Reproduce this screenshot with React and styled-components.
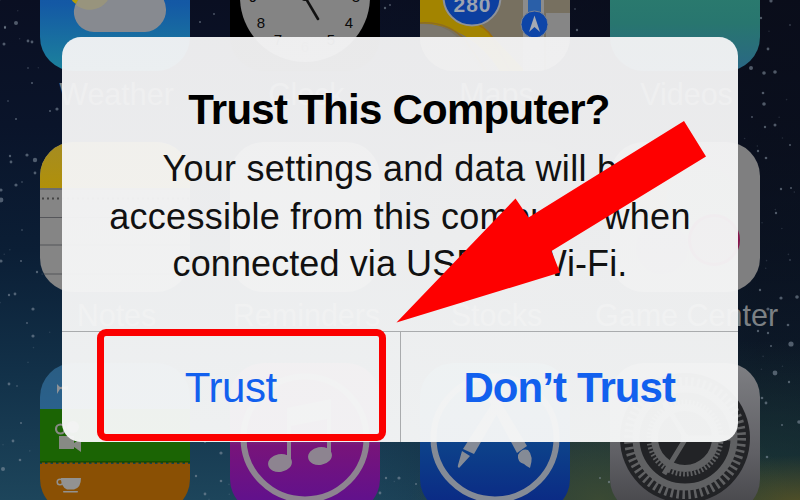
import React from "react";
import styled, { createGlobalStyle } from "styled-components";

const GlobalStyle = createGlobalStyle`
  body {
    margin: 0;
    font-family: "Liberation Sans", Arial, sans-serif;
  }
`;

const Screen = styled.div`
  position: relative;
  width: 800px;
  height: 500px;
  overflow: hidden;
  background:
    radial-gradient(ellipse 110px 50px at 800px 505px, rgba(98, 88, 34, 0.8), transparent),
    radial-gradient(ellipse 190px 110px at 600px 500px, rgba(62, 76, 50, 0.9), transparent),
    radial-gradient(ellipse 260px 160px at 760px 500px, rgba(32, 66, 60, 0.7), transparent),
    linear-gradient(90deg, rgba(10, 12, 20, 0) 45%, rgba(10, 12, 22, 0.65) 95%),
    linear-gradient(#0a0f22 0%, #0a142a 25%, #0b1e35 50%, #123149 75%, #1d455b 100%);
`;

const Stars = styled.svg`
  position: absolute;
  inset: 0;
`;

const IconGrid = styled.div`
  position: relative;
  display: grid;
  grid-template-columns: repeat(4, 150px);
  grid-auto-rows: 221px;
  column-gap: 40px;
  margin: -79px 0 0 40px;
`;

const Cell = styled.div`
  display: flex;
  flex-direction: column;
  align-items: center;
`;

const AppIcon = styled.svg`
  flex: none;
  width: 150px;
  height: 150px;
  border-radius: 34px;
`;

const AppLabel = styled.span`
  padding: 1px 0 0 3px;
  font-size: 30.5px;
  line-height: 45px;
  white-space: nowrap;
  color: #7c8084;
`;

const Dialog = styled.div`
  position: absolute;
  top: 37px;
  left: 62px;
  width: 676px;
  height: 405px;
  box-sizing: border-box;
  display: flex;
  flex-direction: column;
  border-radius: 19px;
  overflow: hidden;
  background: linear-gradient(rgba(243, 243, 244, 0.962), rgba(246, 247, 247, 0.965));
`;

const Message = styled.div`
  flex: 1;
  padding-top: 48px;
  text-align: center;
  white-space: nowrap;
  color: #111;
`;

const Title = styled.h1`
  margin: 0 0 10px;
  padding-right: 2px;
  font-size: 42px;
  line-height: 50px;
  font-weight: bold;
  letter-spacing: ${(props) => props.$spacing}px;
  color: #000;
`;

const Line = styled.div`
  font-size: 36px;
  line-height: 47.5px;
  letter-spacing: ${(props) => props.$spacing}px;
`;

const Buttons = styled.div`
  display: flex;
  height: 111px;
  border-top: 1px solid #a9abad;
  box-sizing: border-box;
`;

const Button = styled.button`
  flex: 1;
  padding: 1px 0 0;
  border: 0;
  background: none;
  font-family: inherit;
  font-size: 42px;
  font-weight: ${(props) => (props.$bold ? "bold" : "normal")};
  letter-spacing: ${(props) => props.$spacing}px;
  color: #1260ee;

  & + & {
    border-left: 1px solid #a9abad;
  }
`;

const Highlight = styled.div`
  position: absolute;
  left: 97px;
  top: 329px;
  width: 289px;
  height: 112px;
  box-sizing: border-box;
  border: 7px solid #fb0000;
  border-radius: 9px;
`;

const Arrow = styled.svg`
  position: absolute;
  inset: 0;
`;

const stars = [
  [16, 23, 2], [5, 28, 1], [4, 44, 1.5], [28, 41, 1.4], [32, 42, 1.4], [5, 27, 1.2],
  [32, 83, 1], [57, 109, 1.6], [50, 111, 1], [16, 119, 1], [8, 101, 0.8], [28, 68, 0.8],
  [10, 156, 1.2], [11, 162, 1.4], [27, 155, 1.6], [35, 160, 2.2], [35, 173, 1.4],
  [16, 185, 1.6], [1, 190, 1.6], [1, 200, 2.4], [22, 182, 0.8], [22, 230, 0.8],
  [1, 261, 1.6], [21, 261, 1], [37, 272, 1.2], [9, 295, 1.2], [15, 294, 1.4],
  [33, 309, 1.6], [27, 323, 0.9], [33, 336, 1.6], [9, 384, 1.4], [17, 386, 0.8],
  [13, 441, 1.4], [20, 460, 1.3], [3, 469, 2], [21, 423, 1],
  [200, 22, 1], [214, 14, 0.9], [205, 442, 1], [221, 453, 1.6], [196, 476, 1.2],
  [221, 481, 1.3], [205, 494, 1.4], [386, 478, 1.2], [399, 478, 1.6], [380, 493, 1.4],
  [385, 8, 1.2], [390, 5, 0.9], [577, 30, 1.2], [575, 9, 0.8], [416, 484, 1],
  [771, 1, 1.6], [761, 18, 1.2], [790, 25, 0.8], [768, 49, 1.4], [751, 68, 2],
  [764, 73, 1.8], [775, 72, 1.8], [763, 93, 1.3], [764, 104, 1.8], [752, 117, 0.9],
  [775, 125, 1.5], [765, 127, 1.2], [758, 151, 1.2], [766, 158, 1.3],
  [790, 145, 1], [781, 189, 1.2], [791, 188, 1], [776, 213, 1.2], [790, 260, 0.8],
  [760, 290, 1.2], [781, 298, 1.6], [797, 297, 1.8], [768, 309, 1.6], [788, 325, 1.3],
  [758, 331, 1.2], [791, 344, 2.6], [775, 373, 2.4], [768, 333, 1.2], [771, 346, 1],
  [762, 398, 1.3], [766, 403, 1.4], [789, 382, 1.2], [799, 422, 1.8], [782, 425, 1],
  [767, 457, 1.3], [600, 478, 1], [609, 482, 1.2],
];

// fine dust between the larger stars
const dust = Array.from({ length: 170 }, (_, i) => [
  (i * 137.508 + i * i * 0.37) % 800,
  (i * 83.17 + i * i * 1.91) % 500,
]);

const Weather = () => (
  <AppIcon viewBox="0 0 150 150">
    <defs>
      <linearGradient id="sky" x1="0" y1="0" x2="0" y2="1">
        <stop offset="0" stopColor="#0c4a9c" />
        <stop offset="0.55" stopColor="#1459a5" />
        <stop offset="1" stopColor="#1c829c" />
      </linearGradient>
    </defs>
    <rect width="150" height="150" fill="url(#sky)" />
    <circle cx="50" cy="65" r="23" fill="#b59d0c" />
    <path d="M54 111a20 20 0 0 1-20-22a20 20 0 0 1 13-16a30 30 0 0 1 53-7a23 23 0 0 1 26 22a22 22 0 0 1-21 23z" fill="#878a90" />
    <path d="M36 84a22 22 0 0 0 35-12v-10H47z" fill="#a39b72" opacity="0.6" />
  </AppIcon>
);

const Clock = () => (
  <AppIcon viewBox="0 0 150 150">
    <rect width="150" height="150" fill="#000" />
    <circle cx="75" cy="76" r="65" fill="#848484" />
    <g fill="#0a0a0a" fontSize="15" textAnchor="middle">
      <text x="31" y="107">8</text>
      <text x="119" y="107">4</text>
      <text x="48" y="124">7</text>
      <text x="101" y="124">5</text>
      <text x="75" y="131" opacity="0.4">6</text>
      <text x="23" y="81">9</text>
      <text x="126" y="81">3</text>
    </g>
    <path d="M75 76L88 98" stroke="#111" strokeWidth="2.6" strokeLinecap="round" />
    <circle cx="75" cy="76" r="4" fill="#111" />
  </AppIcon>
);

const Maps = () => (
  <AppIcon viewBox="0 0 150 150">
    <rect width="150" height="150" fill="#777060" />
    <path d="M0 0h30L60 102L105 150H80Q50 104 0 102z" fill="#a38400" />
    <path d="M0 103Q22 102 36 115L62 150H0z" fill="#7b776e" />
    <path d="M0 102Q28 100 46 120L66 150" fill="none" stroke="#8e6d20" strokeWidth="1.5" />
    <path d="M50 100Q66 106 72 116L90 150" fill="none" stroke="#9a6d10" strokeWidth="1.5" />
    <rect x="103" width="21" height="150" fill="#8c8c8c" />
    <rect x="108" width="13" height="96" fill="#2a5fa8" />
    <rect x="126" y="92" width="24" height="58" fill="#868686" />
    <circle cx="52" cy="76" r="28.5" fill="#0c3fa0" stroke="#8e9299" strokeWidth="2" />
    <text x="52.5" y="91" fill="#9ca3b0" fontSize="21" fontWeight="bold" textAnchor="middle" letterSpacing="1">280</text>
    <circle cx="114.5" cy="103.5" r="13.5" fill="#0d45a8" stroke="#7e8590" strokeWidth="1" />
    <path d="M114.5 94.5l5.5 16.5l-5.5-5l-5.5 5z" fill="#a5aab3" />
  </AppIcon>
);

const Videos = () => (
  <AppIcon viewBox="0 0 150 150">
    <defs>
      <linearGradient id="teal" x1="0" y1="0" x2="0" y2="1">
        <stop offset="0.5" stopColor="#2a7a6e" />
        <stop offset="0.68" stopColor="#28766f" />
        <stop offset="1" stopColor="#2a6785" />
      </linearGradient>
    </defs>
    <rect width="150" height="150" fill="url(#teal)" />
  </AppIcon>
);

const Notes = () => (
  <AppIcon viewBox="0 0 150 150">
    <defs>
      <linearGradient id="pad" x1="0" y1="0" x2="0" y2="1">
        <stop offset="0" stopColor="#a58c22" />
        <stop offset="1" stopColor="#b0900a" />
      </linearGradient>
    </defs>
    <rect width="150" height="150" fill="#858585" />
    <rect width="150" height="46" fill="url(#pad)" />
    <path d="M0 47H150M0 75.5H150M0 103H150M0 132H150" stroke="#55565a" strokeWidth="1.2" />
    <path d="M2 56.5H150" stroke="#444" strokeWidth="2" strokeDasharray="2 3" />
  </AppIcon>
);

const Reminders = () => (
  <AppIcon viewBox="0 0 150 150">
    <rect width="150" height="150" fill="#858585" />
  </AppIcon>
);

const Stocks = () => (
  <AppIcon viewBox="0 0 150 150">
    <rect width="150" height="150" fill="#14202c" />
  </AppIcon>
);

const GameCenter = () => (
  <AppIcon viewBox="0 0 150 150">
    <rect width="150" height="150" fill="#7f7f80" />
    <circle cx="58" cy="50" r="36" fill="#8a8560" />
    <circle cx="92" cy="60" r="36" fill="#768a78" />
    <circle cx="104" cy="98" r="26" fill="#85154c" />
    <circle cx="104" cy="98" r="23" fill="#7f5f70" />
    <circle cx="52" cy="106" r="26" fill="#776a80" />
  </AppIcon>
);

const Passbook = () => (
  <AppIcon viewBox="0 0 150 150">
    <defs>
      <linearGradient id="blueBand" x1="0" y1="0" x2="0" y2="1">
        <stop offset="0" stopColor="#2a5d83" />
        <stop offset="1" stopColor="#2a618c" />
      </linearGradient>
    </defs>
    <rect width="150" height="46" fill="url(#blueBand)" />
    <rect y="46" width="150" height="54" fill="#1b6404" />
    <path d="M0 99H150" stroke="#144c04" strokeWidth="2" />
    <rect y="101" width="150" height="49" fill="#8a5004" />
    <path d="M2 101H150" stroke="#8a5004" strokeWidth="3" strokeDasharray="3 2.5" />
    <path d="M17 21l3 3l8-1v4l-8-1l-3 5z" fill="#8d9297" />
    <g fill="#878a84">
      <circle cx="20.5" cy="66" r="4.5" fill="none" stroke="#878a84" strokeWidth="2.2" />
      <circle cx="33" cy="64" r="6" />
      <rect x="19" y="73" width="15" height="13" />
      <path d="M34 80l7-4v13l-7-5z" />
    </g>
    <g fill="#929292">
      <path d="M21 115H41Q41 125 34 126.5H27Q21 124 21 115z" />
      <circle cx="20" cy="119" r="2.8" fill="none" stroke="#929292" strokeWidth="1.5" />
      <rect x="23" y="128" width="15" height="1.5" rx="0.7" />
    </g>
  </AppIcon>
);

const Itunes = () => (
  <AppIcon viewBox="0 0 150 150">
    <defs>
      <linearGradient id="purple" x1="0" y1="0" x2="0" y2="1">
        <stop offset="0" stopColor="#8a4a6c" />
        <stop offset="0.5" stopColor="#7a2a78" />
        <stop offset="0.55" stopColor="#78147a" />
        <stop offset="1" stopColor="#5c1090" />
      </linearGradient>
    </defs>
    <rect width="150" height="150" fill="url(#purple)" />
    <circle cx="75" cy="75" r="61.5" fill="none" stroke="#8d8490" strokeWidth="6" />
    <g fill="#8d8490">
      <ellipse cx="50" cy="100" rx="12" ry="9" transform="rotate(-10 50 100)" />
      <ellipse cx="90" cy="93" rx="12" ry="9" transform="rotate(-10 90 93)" />
      <path d="M57 45L101 36V94H97V56L61 63V101H57z" />
    </g>
  </AppIcon>
);

const AppStore = () => (
  <AppIcon viewBox="0 0 150 150">
    <defs>
      <linearGradient id="store" x1="0" y1="0" x2="0" y2="1">
        <stop offset="0" stopColor="#2d7c90" />
        <stop offset="0.52" stopColor="#0d438a" />
        <stop offset="1" stopColor="#0a2684" />
      </linearGradient>
    </defs>
    <rect width="150" height="150" fill="url(#store)" />
    <circle cx="75" cy="75" r="61.5" fill="none" stroke="#858b96" strokeWidth="6" />
    <g fill="#858b96">
      <path d="M80 28L88 32L54 91L43 86z" />
      <path d="M42 88L50 93L39 105Q37 104 38 102z" />
      <path d="M66 32L74 28L107 83L97 90z" />
      <path d="M98 92Q102 85 108 87Q114 93 110 105Q106 103 104 101Q97 99 98 92z" />
    </g>
  </AppIcon>
);

const Settings = () => (
  <AppIcon viewBox="0 0 150 150">
    <defs>
      <linearGradient id="steel" x1="0" y1="0" x2="0" y2="1">
        <stop offset="0" stopColor="#7e7f83" />
        <stop offset="0.6" stopColor="#606065" />
        <stop offset="1" stopColor="#454549" />
      </linearGradient>
    </defs>
    <rect width="150" height="150" fill="url(#steel)" />
    <circle cx="75" cy="75" r="65" fill="#222326" />
    <g fill="none" stroke="#606163">
      <circle cx="75" cy="75" r="56" strokeWidth="10" strokeDasharray="2.5 3.36" />
      <circle cx="75" cy="75" r="49" strokeWidth="7" />
      <circle cx="75" cy="75" r="36" strokeWidth="5" strokeDasharray="1.8 1.97" />
      <circle cx="75" cy="75" r="30.5" strokeWidth="7" />
      <path d="M76 75L54 111M76 75L54 39M76 75H125" strokeWidth="5" />
    </g>
    <circle cx="75" cy="75" r="4" fill="#606163" />
  </AppIcon>
);

const apps = [
  { name: "Weather", Icon: Weather },
  { name: "Clock", Icon: Clock },
  { name: "Maps", Icon: Maps },
  { name: "Videos", Icon: Videos },
  { name: "Notes", Icon: Notes },
  { name: "Reminders", Icon: Reminders },
  { name: "Stocks", Icon: Stocks },
  { name: "Game Center", Icon: GameCenter },
  { name: "Passbook", Icon: Passbook },
  { name: "iTunes Store", Icon: Itunes },
  { name: "App Store", Icon: AppStore },
  { name: "Settings", Icon: Settings },
];

const App = () => {
  return (
    <Screen>
      <GlobalStyle />
      <Stars width="800" height="500">
        {dust.map(([x, y], i) => (
          <circle key={i} cx={x} cy={y} r="0.8" fill="#8fa0b0" opacity="0.2" />
        ))}
        {stars.map(([x, y, r], i) => (
          <circle key={i} cx={x} cy={y} r={r} fill="#8a97a5" opacity="0.55" />
        ))}
      </Stars>

      <IconGrid>
        {apps.map(({ name, Icon }, i) => (
          <Cell key={name}>
            <Icon />
            {/* the labels of the last row are below the edge of the screen */}
            {i < 8 && <AppLabel>{name}</AppLabel>}
          </Cell>
        ))}
      </IconGrid>

      <Dialog>
        <Message>
          <Title $spacing={-0.74}>Trust This Computer?</Title>
          <Line $spacing={0.27}>Your settings and data will be</Line>
          <Line $spacing={0.27}>accessible from this computer when</Line>
          <Line $spacing={0.1}>connected via USB or Wi-Fi.</Line>
        </Message>
        <Buttons>
          <Button $spacing={-0.4}>Trust</Button>
          <Button $bold $spacing={-0.9}>Don’t Trust</Button>
        </Buttons>
      </Dialog>

      <Highlight />
      <Arrow width="800" height="500">
        <polygon
          points="684,121 706,156.5 551.5,251 560,272.5 396.5,322.5 515.5,198.5 528.5,217.5"
          fill="#fe0000"
        />
      </Arrow>
    </Screen>
  );
};

export default App;
